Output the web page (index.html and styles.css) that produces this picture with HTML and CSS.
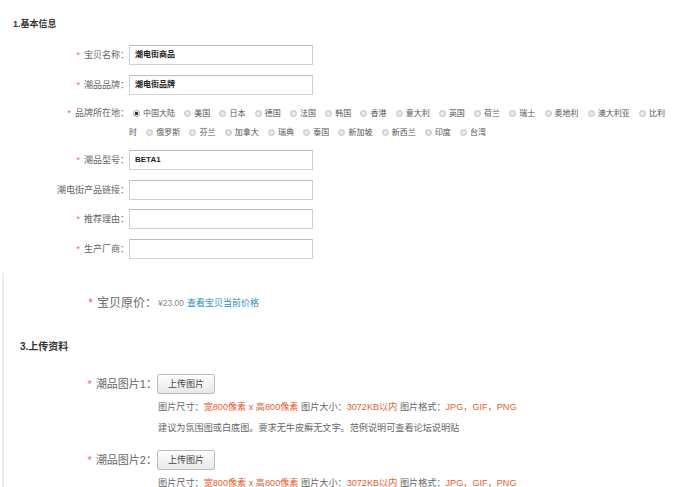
FILE: index.html
```html
<!DOCTYPE html>
<html lang="zh-CN">
<head>
<meta charset="utf-8">
<title>基本信息</title>
<link rel="stylesheet" href="styles.css">
</head>
<body>
<div class="page">
  <h2 class="sec-title sec1">1.基本信息</h2>

  <div class="row">
    <label class="lbl"><span class="star">*</span>宝贝名称：</label>
    <div class="field">潮电街商品</div>
  </div>
  <div class="row">
    <label class="lbl"><span class="star">*</span>潮品品牌：</label>
    <div class="field">潮电街品牌</div>
  </div>
  <div class="row row-radio">
    <label class="lbl"><span class="star">*</span>品牌所在地：</label>
    <div class="radios">
      <span class="opt"><span class="radio on"></span><span class="opt-t">中国大陆</span></span>
      <span class="opt"><span class="radio"></span><span class="opt-t">美国</span></span>
      <span class="opt"><span class="radio"></span><span class="opt-t">日本</span></span>
      <span class="opt"><span class="radio"></span><span class="opt-t">德国</span></span>
      <span class="opt"><span class="radio"></span><span class="opt-t">法国</span></span>
      <span class="opt"><span class="radio"></span><span class="opt-t">韩国</span></span>
      <span class="opt"><span class="radio"></span><span class="opt-t">香港</span></span>
      <span class="opt"><span class="radio"></span><span class="opt-t">意大利</span></span>
      <span class="opt"><span class="radio"></span><span class="opt-t">英国</span></span>
      <span class="opt"><span class="radio"></span><span class="opt-t">荷兰</span></span>
      <span class="opt"><span class="radio"></span><span class="opt-t">瑞士</span></span>
      <span class="opt"><span class="radio"></span><span class="opt-t">奥地利</span></span>
      <span class="opt"><span class="radio"></span><span class="opt-t">澳大利亚</span></span>
      <span class="opt"><span class="radio"></span><span class="opt-t"><span>比利</span><span>时</span></span></span>
      <span class="opt"><span class="radio"></span><span class="opt-t">俄罗斯</span></span>
      <span class="opt"><span class="radio"></span><span class="opt-t">芬兰</span></span>
      <span class="opt"><span class="radio"></span><span class="opt-t">加拿大</span></span>
      <span class="opt"><span class="radio"></span><span class="opt-t">瑞典</span></span>
      <span class="opt"><span class="radio"></span><span class="opt-t">泰国</span></span>
      <span class="opt"><span class="radio"></span><span class="opt-t">新加坡</span></span>
      <span class="opt"><span class="radio"></span><span class="opt-t">新西兰</span></span>
      <span class="opt"><span class="radio"></span><span class="opt-t">印度</span></span>
      <span class="opt"><span class="radio"></span><span class="opt-t">台湾</span></span>
    </div>
  </div>
  <div class="row">
    <label class="lbl"><span class="star">*</span>潮品型号：</label>
    <div class="field">BETA1</div>
  </div>
  <div class="row">
    <label class="lbl">潮电街产品链接：</label>
    <div class="field"></div>
  </div>
  <div class="row">
    <label class="lbl"><span class="star">*</span>推荐理由：</label>
    <div class="field"></div>
  </div>
  <div class="row">
    <label class="lbl"><span class="star">*</span>生产厂商：</label>
    <div class="field"></div>
  </div>

  <div class="sec2">
    <div class="price-row">
      <label class="lbl2 big"><span class="star">*</span>宝贝原价：</label>
      <span class="price">¥23.00</span>
      <a class="link" href="#">查看宝贝当前价格</a>
    </div>

    <h2 class="sec-title sec3">3.上传资料</h2>

    <div class="up-row">
      <label class="lbl2 mid"><span class="star">*</span>潮品图片1：</label>
      <div class="up-body">
        <button class="btn" type="button">上传图片</button>
        <p class="info">图片尺寸：<em>宽800像素 x 高800像素</em> 图片大小：<em>3072KB以内</em> 图片格式：<em>JPG，GIF，PNG</em></p>
        <p class="info">建议为氛围图或白底图。要求无牛皮癣无文字。范例说明可查看论坛说明贴</p>
      </div>
    </div>
    <div class="up-row">
      <label class="lbl2 mid"><span class="star">*</span>潮品图片2：</label>
      <div class="up-body">
        <button class="btn" type="button">上传图片</button>
        <p class="info">图片尺寸：<em>宽800像素 x 高800像素</em> 图片大小：<em>3072KB以内</em> 图片格式：<em>JPG，GIF，PNG</em></p>
      </div>
    </div>
  </div>
</div>
</body>
</html>
```
FILE: styles.css
```css
html, body {
  margin: 0;
  padding: 0;
  background: #fff;
}
body {
  font-family: "Liberation Sans", "Noto Sans CJK SC", sans-serif;
  color: #666;
  overflow: hidden;
}
.page {
  padding-top: 18px;
  width: 697px;
}
.sec-title {
  margin: 0;
  font-weight: bold;
  color: #333;
}
.sec1 {
  font-size: 9px;
  line-height: 12px;
  padding-left: 13px;
  margin-bottom: 15px;
}
.row {
  display: flex;
  align-items: center;
  height: 20px;
  margin-bottom: 9.5px;
}
.lbl {
  width: 129px;
  flex: none;
  text-align: right;
  font-size: 9px;
  line-height: 20px;
  color: #666;
  white-space: nowrap;
}
.star {
  color: #e8685e;
  margin-right: 4px;
}
.field {
  width: 184px;
  height: 20px;
  box-sizing: border-box;
  border: 1px solid #cfcfcf;
  border-top-color: #bdbdbd;
  padding-left: 5px;
  font-size: 8px;
  line-height: 18px;
  font-weight: bold;
  color: #222;
}
.row-radio {
  height: auto;
  align-items: flex-start;
  margin-top: 0;
  margin-bottom: 8px;
}
.row-radio .lbl {
  line-height: 19px;
}
.radios {
  width: 545px;
  font-size: 8px;
  line-height: 19px;
  color: #555;
}
.opt-t {
  margin-right: 3px;
}
.radio {
  display: inline-block;
  width: 7px;
  height: 7px;
  box-sizing: border-box;
  border-radius: 50%;
  margin: 0 3px 0 4px;
  vertical-align: -1px;
  border: 1px solid #c4c4c4;
  background: radial-gradient(circle at 50% 50%, #f4f4f4 0, #e0e0e0 60%, #cfcfcf 100%);
}
.radio.on {
  border-color: #9a9a9a;
  background: radial-gradient(circle, #333 0, #333 1.5px, #fff 2px);
}
.sec2 {
  margin-top: 14px;
  margin-left: 2px;
  border-left: 2px solid #ececec;
  padding-top: 22px;
  padding-bottom: 4px;
}
.price-row {
  display: flex;
  align-items: center;
  height: 16px;
}
.lbl2 {
  width: 153px;
  flex: none;
  text-align: right;
  color: #666;
  white-space: nowrap;
}
.big {
  font-size: 12px;
  line-height: 16px;
}
.mid {
  font-size: 11px;
  line-height: 20px;
}
.price {
  font-size: 8.5px;
  color: #888;
  margin-left: 1px;
  margin-right: 3px;
}
.link {
  font-size: 9px;
  color: #2a8cc0;
  text-decoration: none;
}
.sec3 {
  font-size: 10px;
  line-height: 14px;
  padding-left: 16px;
  margin-top: 29px;
  margin-bottom: 20px;
}
.up-row {
  display: flex;
  align-items: flex-start;
  margin-bottom: 11px;
}
.up-row:last-child {
  margin-bottom: 0;
}
.up-body {
  display: flex;
  flex-direction: column;
  align-items: flex-start;
}
.btn {
  width: 58px;
  height: 20px;
  box-sizing: border-box;
  border: 1px solid #bdbdbd;
  border-radius: 2px;
  background: linear-gradient(#fdfdfd, #e8e8e8);
  font-family: "Liberation Sans", "Noto Sans CJK SC", sans-serif;
  font-size: 9px;
  color: #444;
  padding: 0;
  margin: 0 0 3px 0;
}
.info {
  margin: 0 0 0 1px;
  font-size: 9.15px;
  line-height: 21px;
  color: #666;
  white-space: nowrap;
}
.info em {
  font-style: normal;
  color: #e45d2e;
}
```
